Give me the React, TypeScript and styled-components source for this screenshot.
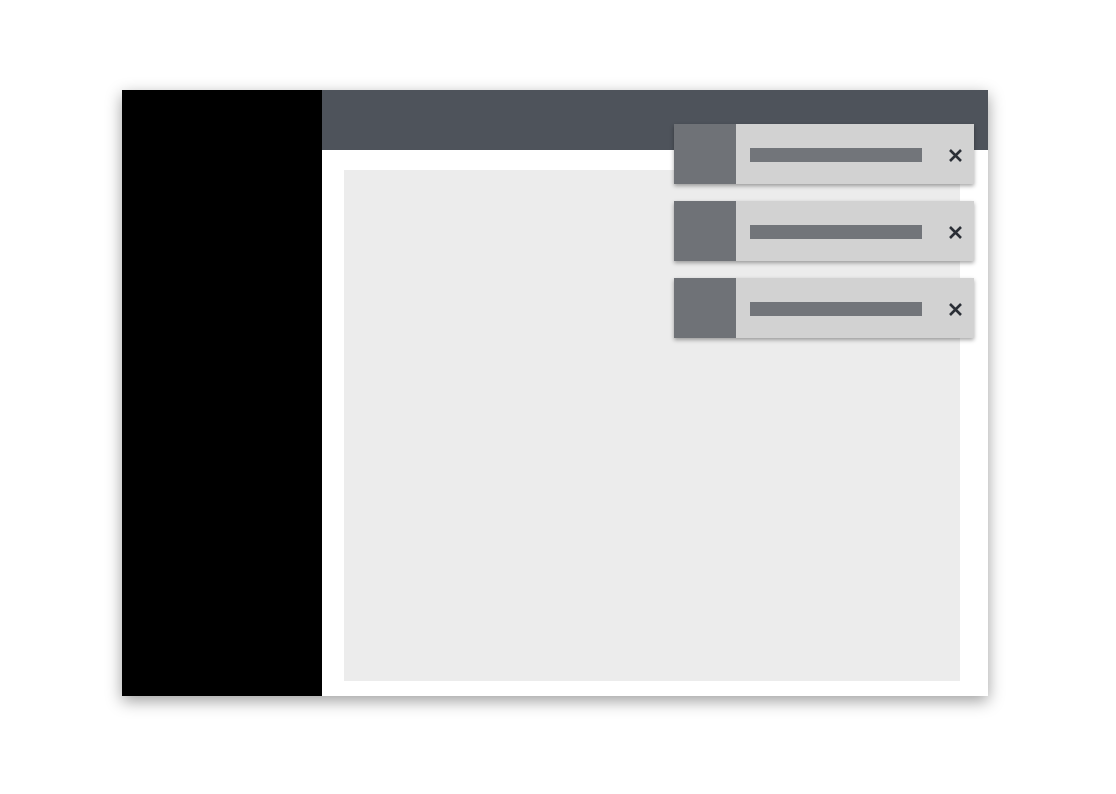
import * as React from 'react';
import styled, { createGlobalStyle } from 'styled-components';

const GlobalStyle = createGlobalStyle`
  html, body {
    margin: 0;
    background: #ffffff;
    font-family: "Liberation Sans", Arial, sans-serif;
  }
`;

const Page = styled.div`
  min-height: 100vh;
  box-sizing: border-box;
  padding: 90px 0 0 122px;
`;

const Window = styled.div`
  position: relative;
  width: 866px;
  height: 606px;
  display: flex;
  background: #ffffff;
  box-shadow: 0 5px 15px rgba(0, 0, 0, 0.38);
`;

const Sidebar = styled.div`
  width: 200px;
  flex-shrink: 0;
  background: #000000;
`;

const Main = styled.div`
  flex: 1;
  display: flex;
  flex-direction: column;
`;

const Header = styled.div`
  height: 60px;
  background: #4e535b;
`;

const Body = styled.div`
  flex: 1;
  padding: 20px 28px 15px 22px;
  display: flex;
`;

const Content = styled.div`
  flex: 1;
  background: #ececec;
`;

const ToastStack = styled.div`
  position: absolute;
  top: 34px;
  right: 14px;
  display: flex;
  flex-direction: column;
  gap: 17px;
`;

const Toast = styled.div`
  width: 300px;
  height: 60px;
  display: flex;
  align-items: center;
  background: #d2d2d2;
  box-shadow: 0 2px 4px rgba(0, 0, 0, 0.35);
`;

const ToastIcon = styled.div`
  width: 62px;
  align-self: stretch;
  background: #6f7277;
`;

const ToastText = styled.div`
  width: 172px;
  height: 14px;
  margin: 2px 0 0 14px;
  background: #72757a;
`;

const Close = styled.button`
  margin: 2px 0 0 24px;
  width: 18px;
  height: 18px;
  padding: 0;
  border: none;
  background: transparent;
  display: flex;
  align-items: center;
  justify-content: center;
`;

function CloseIcon() {
  return (
    <svg width="15" height="15" viewBox="0 0 15 15">
      <path d="M2 2 L13 13 M13 2 L2 13" stroke="#2b2f36" strokeWidth="2.6" strokeLinecap="butt" />
    </svg>
  );
}

export default function App() {
  const toasts = [1, 2, 3];
  return (
    <Page>
      <GlobalStyle />
      <Window>
        <Sidebar />
        <Main>
          <Header />
          <Body>
            <Content />
          </Body>
        </Main>
        <ToastStack>
          {toasts.map((id) => (
            <Toast key={id}>
              <ToastIcon />
              <ToastText />
              <Close aria-label="Close">
                <CloseIcon />
              </Close>
            </Toast>
          ))}
        </ToastStack>
      </Window>
    </Page>
  );
}
